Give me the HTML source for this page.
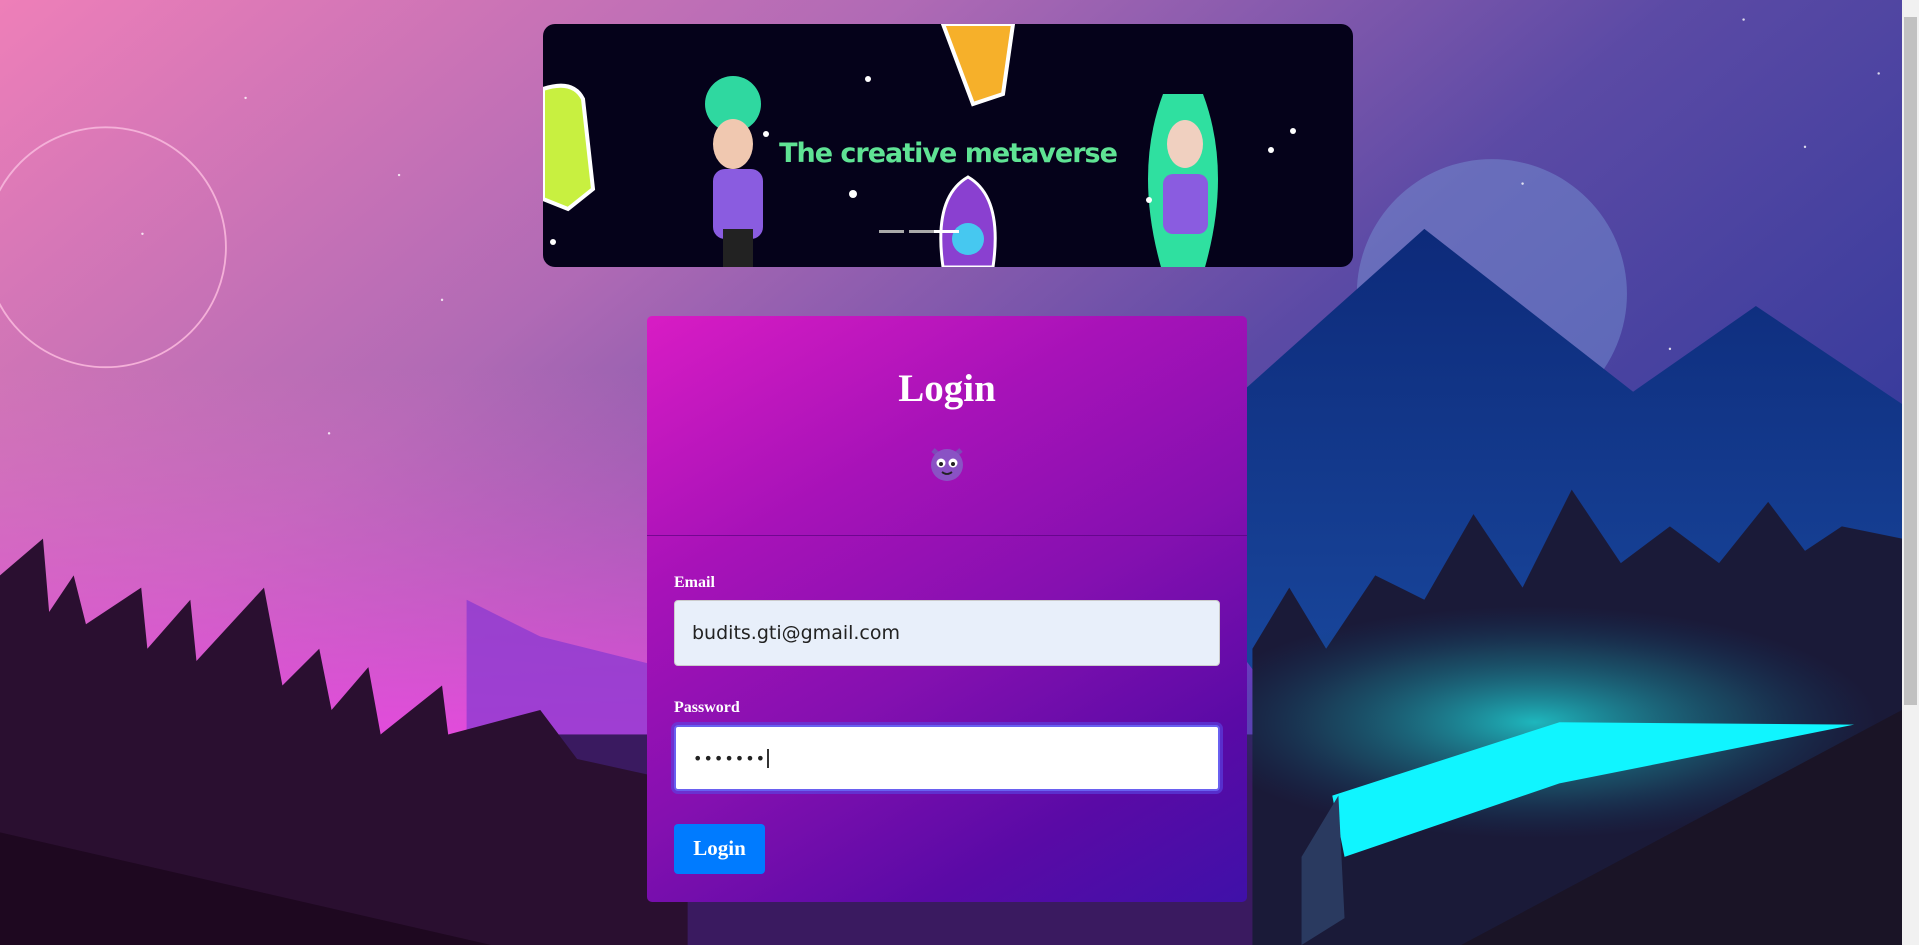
<!DOCTYPE html>
<html><head><meta charset="utf-8"><style>
html,body{margin:0;padding:0;width:1919px;height:945px;overflow:hidden;font-family:"Liberation Serif",serif;}
#bg{position:absolute;left:0;top:0;width:1902px;height:945px;}
#sb{position:absolute;left:1902px;top:0;width:17px;height:945px;background:#f1f1f1;}
#sb .th{position:absolute;left:2px;top:17px;width:13px;height:688px;background:#c1c1c1;}
#banner{position:absolute;left:543px;top:24px;width:810px;height:243px;background:#05021a;border-radius:12px;overflow:hidden;}
#banner .t{position:absolute;left:0;width:810px;top:114px;text-align:center;font-family:"DejaVu Sans","Liberation Sans",sans-serif;font-weight:bold;font-size:27px;color:#5fe394;letter-spacing:-1px;}
#card{position:absolute;left:647px;top:316px;width:600px;height:586px;border-radius:5px;background:linear-gradient(150deg,#d81cc4 0%,#a712b8 30%,#8510b0 55%,#5a0aa6 80%,#3f10a8 100%);overflow:hidden;}
#card h1{margin:0;position:absolute;top:50px;width:100%;text-align:center;color:#fff;font-size:39px;font-weight:bold;}
.emo{position:absolute;left:281px;top:128px;}
.div{position:absolute;left:0;right:0;top:219px;height:1px;background:rgba(80,0,120,.6);}
.lbl{position:absolute;left:27px;color:#fff;font-weight:bold;font-size:16px;}
.inp{position:absolute;left:27px;width:546px;height:66px;border-radius:4px;box-sizing:border-box;font-family:"DejaVu Sans","Liberation Sans",sans-serif;font-size:19px;color:#222;padding-left:17px;line-height:64px;}
.btn{position:absolute;left:27px;top:508px;width:91px;height:50px;border-radius:4px;background:#007bff;color:#fff;font-weight:bold;font-size:21px;text-align:center;line-height:48px;}
</style></head><body>
<svg id="bg" viewBox="0 0 1549 772" preserveAspectRatio="none">
<defs>
<linearGradient id="sky" x1="0" y1="0" x2="1" y2="0.6">
<stop offset="0" stop-color="#ee7fb8"/><stop offset="0.35" stop-color="#b06ab5"/><stop offset="0.65" stop-color="#5b4aa5"/><stop offset="1" stop-color="#30389a"/></linearGradient>
<linearGradient id="pinkb" x1="0" y1="0" x2="0" y2="1"><stop offset="0" stop-color="#f070c8" stop-opacity="0"/><stop offset="1" stop-color="#e848e0"/></linearGradient>
<linearGradient id="mt" x1="0" y1="0" x2="0" y2="1"><stop offset="0" stop-color="#0d2a7a"/><stop offset="1" stop-color="#1a4aa0"/></linearGradient>
<radialGradient id="glow" cx="0.5" cy="0.5" r="0.5"><stop offset="0" stop-color="#1fc8cc" stop-opacity="0.9"/><stop offset="0.6" stop-color="#1a6a80" stop-opacity="0.5"/><stop offset="1" stop-color="#123a6a" stop-opacity="0"/></radialGradient>
</defs>
<rect width="1549" height="772" fill="url(#sky)"/>
<rect x="0" y="300" width="900" height="320" fill="url(#pinkb)"/>
<circle cx="86" cy="202" r="98" fill="none" stroke="#f4b0d8" stroke-width="1.5"/>
<circle cx="1215" cy="240" r="110" fill="#7a9ad8" opacity="0.45"/>
<polygon points="900,420 1160,187 1330,320 1430,250 1549,330 1549,600 900,600" fill="url(#mt)"/>
<polygon points="380,490 440,520 600,560 820,400 1000,520 1060,600 380,620" fill="#8a3ad0" opacity="0.75"/>
<rect x="420" y="600" width="700" height="172" fill="#3a1a60"/>
<polygon points="0,470 35,440 40,500 60,470 70,510 115,480 120,530 155,490 160,540 215,480 230,560 260,530 270,580 300,545 310,600 360,560 365,600 440,580 470,620 560,640 560,772 0,772" fill="#2a0f30"/>
<polygon points="1020,530 1050,480 1080,530 1120,470 1160,490 1200,420 1240,480 1280,400 1320,460 1360,430 1400,460 1440,410 1470,450 1500,430 1549,440 1549,772 1020,772" fill="#1a1a38"/>
<ellipse cx="1250" cy="590" rx="280" ry="95" fill="url(#glow)"/>
<polygon points="1085,650 1270,590 1510,592 1270,640 1095,700" fill="#10f5ff"/>
<polygon points="1060,700 1090,650 1095,750 1060,772" fill="#2a3a60"/>
<polygon points="1190,772 1549,580 1549,772" fill="#1a1426"/>
<polygon points="0,680 400,772 0,772" fill="#1e0820"/>
<g fill="#fff" opacity="0.8"><circle cx="200" cy="80" r="1"/><circle cx="325" cy="143" r="1"/><circle cx="116" cy="191" r="1"/><circle cx="360" cy="245" r="1"/><circle cx="268" cy="354" r="1"/><circle cx="1420" cy="16" r="1"/><circle cx="1470" cy="120" r="1"/><circle cx="1360" cy="285" r="1"/><circle cx="1530" cy="60" r="1"/><circle cx="1240" cy="150" r="1"/></g>
</svg>
<div id="sb"><div class="th"></div></div>
<div id="banner">
<svg width="810" height="243" style="position:absolute;left:0;top:0">
<path d="M0,65 q30,-10 40,10 l10,90 l-25,20 l-25,-10z" fill="#c8f040" stroke="#fff" stroke-width="4"/>
<circle cx="190" cy="80" r="28" fill="#2fd8a0"/><rect x="170" y="145" width="50" height="70" rx="12" fill="#8a5ce0"/><rect x="180" y="205" width="30" height="38" fill="#222"/><ellipse cx="190" cy="120" rx="20" ry="25" fill="#f0c8b0"/>
<path d="M400,0 l70,0 l-10,70 l-30,10z" fill="#f6b02a" stroke="#fff" stroke-width="4"/>
<path d="M620,70 q-30,80 0,180 l40,0 q30,-100 0,-180z" fill="#2fe0a0"/><rect x="620" y="150" width="45" height="60" rx="10" fill="#8a5ce0"/><ellipse cx="642" cy="120" rx="18" ry="24" fill="#f0d0c0"/>
<path d="M400,243 q-10,-70 25,-90 q35,20 25,90z" fill="#8a40d0" stroke="#fff" stroke-width="3"/><circle cx="425" cy="215" r="16" fill="#46c8f0"/>
<g fill="#fff"><circle cx="223" cy="110" r="3"/><circle cx="310" cy="170" r="4"/><circle cx="325" cy="55" r="3"/><circle cx="728" cy="126" r="3"/><circle cx="750" cy="107" r="3"/><circle cx="606" cy="176" r="3"/><circle cx="10" cy="218" r="3"/></g>
<rect x="336" y="206" width="25" height="3" fill="#aaa"/><rect x="366" y="206" width="25" height="3" fill="#aaa"/><rect x="391" y="206" width="25" height="3" fill="#fff"/>
</svg>
<div class="t">The creative metaverse</div>
</div>
<div id="card">
<h1>Login</h1>
<svg class="emo" width="38" height="38" viewBox="0 0 38 38"><path d="M5,6 l7,6 M33,6 l-7,6" stroke="#7d4ab8" stroke-width="5"/><circle cx="19" cy="21" r="16" fill="#8a52c4"/><circle cx="13" cy="19" r="4.5" fill="#fff"/><circle cx="25" cy="19" r="4.5" fill="#fff"/><circle cx="13" cy="20" r="2" fill="#222"/><circle cx="25" cy="20" r="2" fill="#222"/><path d="M14,28 q5,4 10,0" stroke="#222" stroke-width="1.8" fill="none"/></svg>
<div class="div"></div>
<div class="lbl" style="top:258px">Email</div>
<div class="inp" style="top:284px;background:#e8effa;border:1px solid #ccc">budits.gti@gmail.com</div>
<div class="lbl" style="top:383px">Password</div>
<div class="inp" style="top:409px;background:#fff;border:2px solid #6a60f0;box-shadow:0 0 0 3px rgba(90,70,230,.6);font-size:16px;letter-spacing:1px">•••••••<span style="border-left:2px solid #333;margin-left:1px"></span></div>
<div class="btn">Login</div>
</div>
</body></html>
